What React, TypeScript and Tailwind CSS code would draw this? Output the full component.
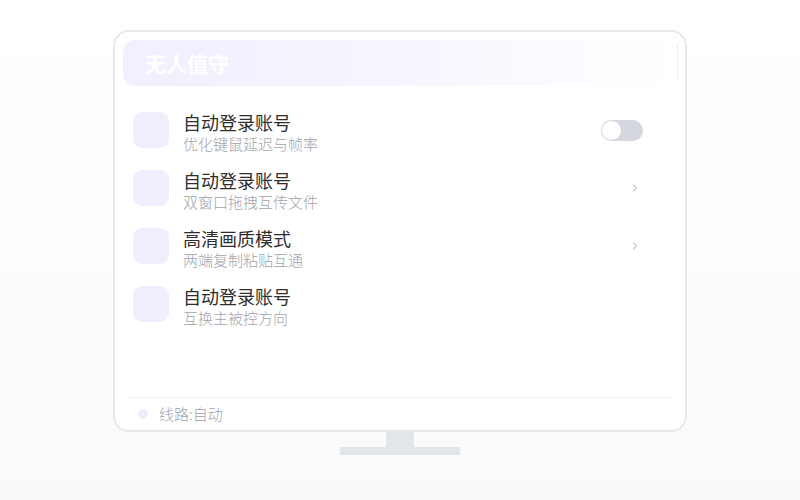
import { ChevronRight } from 'lucide-react'

const rows = [
  { title: '自动登录账号', sub: '优化键鼠延迟与帧率', action: 'toggle' },
  { title: '自动登录账号', sub: '双窗口拖拽互传文件', action: 'chevron' },
  { title: '高清画质模式', sub: '两端复制粘贴互通', action: 'chevron' },
  { title: '自动登录账号', sub: '互换主被控方向', action: 'none' },
]

export default function App() {
  return (
    <div
      className="w-[800px] h-[500px] bg-gradient-to-b from-white to-[#fafafb] flex flex-col items-center pt-[30px]"
      style={{ fontFamily: '"Noto Sans CJK SC", "Noto Sans", sans-serif' }}
    >
      {/* Monitor */}
      <div className="w-[574px] h-[402px] bg-white border-2 border-[#e6e8ec] rounded-[16px] flex flex-col px-[8px] pt-[8px]">
        {/* Header */}
        <div className="relative h-[46px] rounded-[12px] bg-gradient-to-r from-[#f2effe] via-[#f7f5ff] to-white flex items-center pl-[22px]">
          <span className="text-[21px] font-bold text-white leading-none">无人值守</span>
          <div className="absolute right-[22px] top-1/2 -translate-y-1/2 flex gap-[3px]">
            <span className="w-[5px] h-[5px] rounded-full bg-white" />
            <span className="w-[5px] h-[5px] rounded-full bg-white" />
            <span className="w-[5px] h-[5px] rounded-full bg-white" />
          </div>
          <div className="absolute right-[-1px] top-[4px] bottom-[6px] w-px bg-[#eceef2]" />
        </div>

        {/* List */}
        <div className="flex flex-col mt-[26px] px-[10px] gap-[22px] flex-1">
          {rows.map((r, i) => (
            <div key={i} className="flex items-center h-[36px]">
              <div className="w-[36px] h-[36px] rounded-[9px] bg-[#f1eefd] shrink-0" />
              <div className="ml-[14px] flex flex-col flex-1 self-start -mt-[2px]">
                <span className="text-[18px] leading-[24px] text-[#2e2e2e]">{r.title}</span>
                <span className="text-[15px] leading-[20px] font-light text-[#9fa3aa]">{r.sub}</span>
              </div>
              {r.action === 'toggle' && (
                <div className="w-[42px] h-[21px] rounded-full bg-[#d5d7de] flex items-center px-[1px] mr-[24px]">
                  <span className="w-[19px] h-[19px] rounded-full bg-white" />
                </div>
              )}
              {r.action === 'chevron' && (
                <ChevronRight className="w-[12px] h-[12px] text-[#8f939c] mr-[26px]" strokeWidth={1.75} />
              )}
            </div>
          ))}
        </div>

        {/* Footer */}
        <div className="border-t border-[#eef0f3] mx-[3px] h-[33px] flex items-center pl-[12px]">
          <span className="w-[10px] h-[10px] rounded-full bg-[#efecfd]" />
          <span className="ml-[11px] text-[15px] font-light text-[#9fa3aa]">线路:自动</span>
        </div>
      </div>

      {/* Stand */}
      <div className="w-[28px] h-[15px] bg-[#e2e5e9]" />
      <div className="w-[120px] h-[8px] bg-[#e2e5e9]" />
    </div>
  )
}
